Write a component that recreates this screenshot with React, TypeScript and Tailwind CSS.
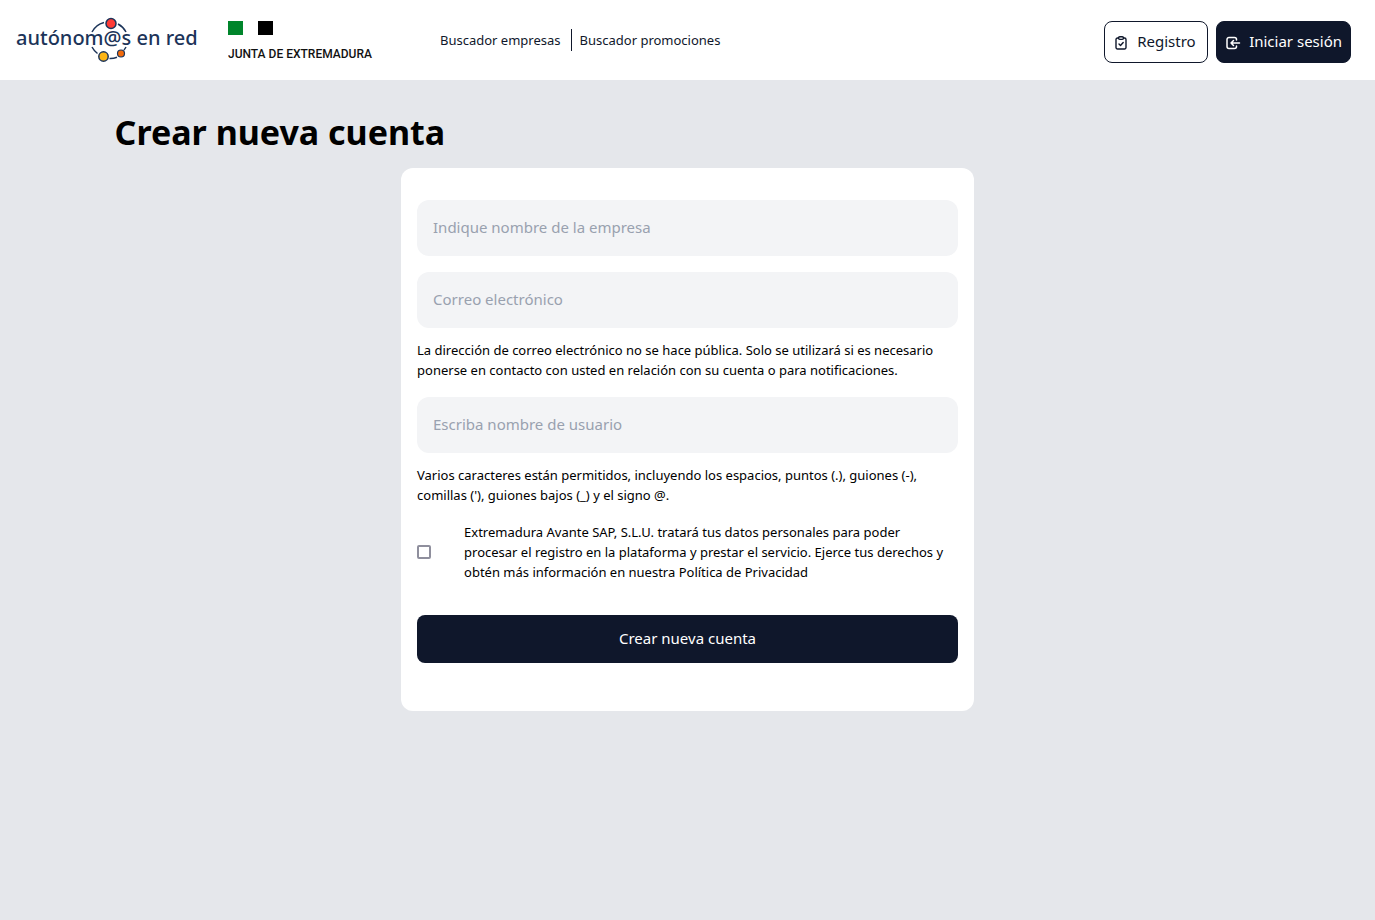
import { useState } from "react";
import type { FormEvent } from "react";

const navLinks = [
    { label: "Buscador empresas", href: "#empresas" },
    { label: "Buscador promociones", href: "#promociones" },
];

function BrandLogo() {
    return (
        <svg viewBox="0 0 184 48" className="h-12 w-[184px] shrink-0" role="img" aria-label="autónom@s en red">
            <g fill="none" stroke="#1c3459" strokeWidth="1.5">
                <path d="M76 16A19 19 0 0 1 88 6.5" />
                <path d="M102 8A19 19 0 0 1 110 16" />
                <path d="M76 31a19 19 0 0 0 5.5 6.5" />
                <path d="M93.5 42.5a19 19 0 0 0 7.5-1.2" />
                <path d="M108 34a19 19 0 0 0 2-3" />
            </g>
            <circle cx="95" cy="7.5" r="5" fill="#ff3b36" stroke="#1c3459" strokeWidth="1.5" />
            <circle cx="87.5" cy="40.5" r="4.7" fill="#fdb515" stroke="#1c3459" strokeWidth="1.5" />
            <circle cx="105" cy="37.5" r="3.5" fill="#f26a0a" stroke="#1c3459" strokeWidth="1.2" />
            <text x="0" y="29" fill="#1c3459" fontSize="20" className="font-['Noto_Sans',sans-serif] font-medium">
                autónom@s en red
            </text>
        </svg>
    );
}

function JuntaLogo() {
    return (
        <svg viewBox="0 0 152 44" className="h-11 w-[152px] shrink-0" role="img" aria-label="Junta de Extremadura">
            <rect x="0" y="3" width="15" height="14" fill="#00852b" />
            <rect x="30" y="3" width="15" height="14" fill="#000" />
            <text x="0" y="40" fill="#111" fontSize="12" className="font-['Roboto',sans-serif] font-medium">
                JUNTA DE EXTREMADURA
            </text>
        </svg>
    );
}

function ClipboardIcon() {
    return (
        <svg viewBox="0 0 16 16" className="mt-1 size-4" fill="none" stroke="currentColor" strokeWidth="1.4" strokeLinecap="round" strokeLinejoin="round" aria-hidden="true">
            <path d="M5.5 3h-1A1.500 1.500 0 0 0 3 4.500v8A1.500 1.500 0 0 0 4.500 14h7a1.500 1.500 0 0 0 1.500-1.500v-8A1.500 1.500 0 0 0 11.500 3h-1" />
            <rect x="5.5" y="1.8" width="5" height="2.6" rx="1.3" />
            <path d="m6 9 1.500 1.500L10.200 7.500" />
        </svg>
    );
}

function LoginIcon() {
    return (
        <svg viewBox="0 0 16 16" className="mt-1 size-4" fill="none" stroke="currentColor" strokeWidth="1.5" strokeLinecap="round" strokeLinejoin="round" aria-hidden="true">
            <path d="M11.500 5v-.5a2 2 0 0 0-2-2H4a2 2 0 0 0-2 2v7a2 2 0 0 0 2 2h5.500a2 2 0 0 0 2-2V11" />
            <path d="M14.500 8H6m2.500-2.500L6 8l2.500 2.500" />
        </svg>
    );
}

function TextField({ id, label, type = "text" }: { id: string; label: string; type?: string }) {
    return (
        <input
            id={id}
            name={id}
            type={type}
            aria-label={label}
            placeholder={label}
            className="block h-14 w-full rounded-xl bg-gray-100 px-4 pb-0.5 text-[15px] outline-none placeholder:text-gray-400"
        />
    );
}

export default function App() {
    const [accepted, setAccepted] = useState(false);

    function handleSubmit(event: FormEvent) {
        event.preventDefault();
    }

    return (
        <div className="min-h-screen bg-[#e5e7eb] font-['Noto_Sans',sans-serif] text-black">
            <header className="flex h-20 items-center bg-white pr-6 pl-4 text-slate-900">
                <a href="#inicio">
                    <BrandLogo />
                </a>
                <a href="#junta" className="ml-7">
                    <JuntaLogo />
                </a>
                <nav className="ml-[60px] flex items-center text-[13px]">
                    {navLinks.map((link) => (
                        <a
                            key={link.href}
                            href={link.href}
                            className="border-l border-slate-900 px-2 leading-[22px] whitespace-nowrap first:border-0 first:pr-[10px] first:pl-0"
                        >
                            {link.label}
                        </a>
                    ))}
                </nav>
                <div className="mt-1 ml-auto flex gap-2 text-[15px]">
                    <button type="button" className="flex h-[42px] min-w-[104px] items-center gap-2 rounded-lg border border-slate-900 px-2 pb-0.5">
                        <ClipboardIcon />
                        Registro
                    </button>
                    <button type="button" className="flex h-[42px] items-center gap-2 rounded-lg border border-slate-900 bg-slate-900 px-2 pb-0.5 text-white">
                        <LoginIcon />
                        Iniciar sesión
                    </button>
                </div>
            </header>

            <main className="mx-auto w-10/12 pt-8">
                <h1 className="mb-4 text-[34px] leading-10 font-bold">Crear nueva cuenta</h1>
                <form onSubmit={handleSubmit} className="mx-auto w-1/2 rounded-xl bg-white px-4 pt-8 pb-12">
                    <TextField id="company" label="Indique nombre de la empresa" />
                    <div className="mt-4">
                        <TextField id="email" label="Correo electrónico" type="email" />
                    </div>
                    <p className="mt-3 mb-[17px] text-[13px] leading-5">
                        La dirección de correo electrónico no se hace pública. Solo se utilizará si es necesario
                        ponerse en contacto con usted en relación con su cuenta o para notificaciones.
                    </p>
                    <TextField id="username" label="Escriba nombre de usuario" />
                    <p className="mt-3 mb-[17px] text-[13px] leading-5">
                        Varios caracteres están permitidos, incluyendo los espacios, puntos (.), guiones (-),
                        comillas ('), guiones bajos (_) y el signo @.
                    </p>
                    <div className="flex items-center">
                        <input
                            id="privacy"
                            type="checkbox"
                            checked={accepted}
                            onChange={(event) => setAccepted(event.target.checked)}
                            className="size-3.5 shrink-0 appearance-none rounded-xs border-2 border-[#8f8f9d] checked:bg-slate-900"
                        />
                        <label htmlFor="privacy" className="ml-[33px] pr-2 text-[13px] leading-5">
                            Extremadura Avante SAP, S.L.U. tratará tus datos personales para poder
                            procesar el registro en la plataforma y prestar el servicio. Ejerce tus derechos y
                            obtén más información en nuestra Política de Privacidad
                        </label>
                    </div>
                    <button type="submit" className="mt-[33px] h-12 w-full rounded-lg bg-slate-900 pb-0.5 text-[15px] text-white">
                        Crear nueva cuenta
                    </button>
                </form>
            </main>
        </div>
    );
}
